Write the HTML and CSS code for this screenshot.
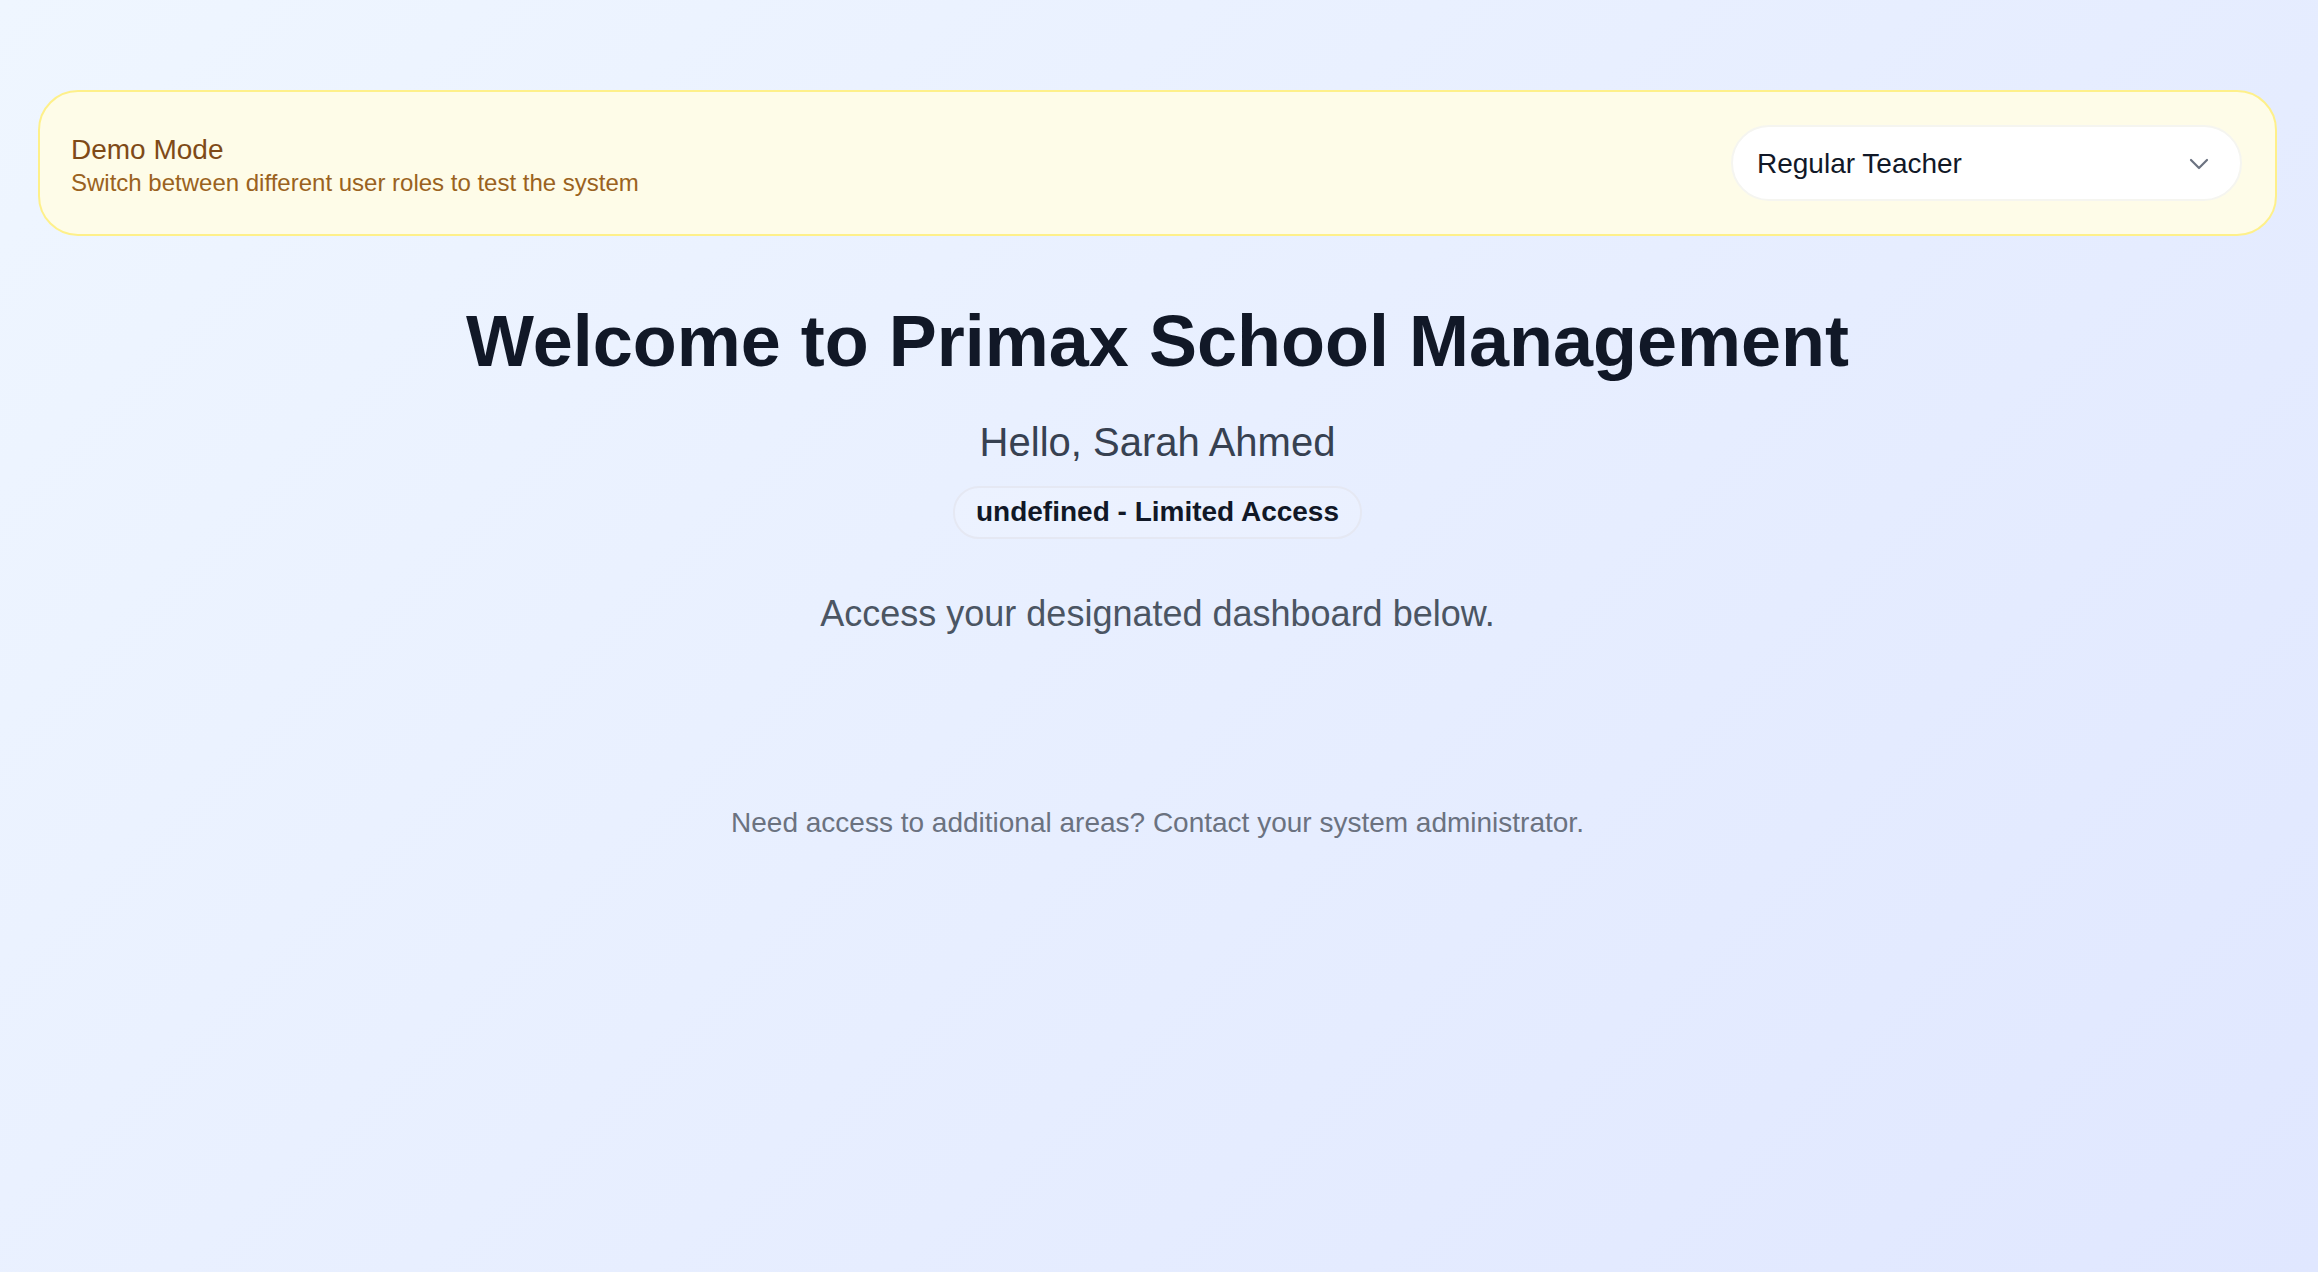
FILE: index.html
```html
<!DOCTYPE html>
<html lang="en">
<head>
<meta charset="utf-8">
<title>Primax School Management</title>
<link rel="stylesheet" href="styles.css">
</head>
<body>
<div class="page">
  <div class="demo-banner">
    <div class="demo-text">
      <div class="demo-title">Demo Mode</div>
      <div class="demo-sub">Switch between different user roles to test the system</div>
    </div>
    <div class="role-select">
      <span class="role-label">Regular Teacher</span>
      <svg class="chevron" width="20" height="12" viewBox="0 0 20 12" fill="none"><polyline points="2,2 10,10 18,2" stroke="#6b7280" stroke-width="2.2" stroke-linecap="round" stroke-linejoin="round"/></svg>
    </div>
  </div>
  <main class="welcome">
    <h1 class="title">Welcome to Primax School Management</h1>
    <p class="hello">Hello, Sarah Ahmed</p>
    <span class="badge">undefined - Limited Access</span>
    <p class="access">Access your designated dashboard below.</p>
    <p class="footer-note">Need access to additional areas? Contact your system administrator.</p>
  </main>
</div>
</body>
</html>
```
FILE: styles.css
```css
* { box-sizing: border-box; }
html, body { margin: 0; padding: 0; }
body {
  min-height: 100vh;
  font-family: "Liberation Sans", Arial, Helvetica, sans-serif;
  background: linear-gradient(135deg, #eff6ff 0%, #e0e7ff 100%);
  color: #111827;
}
.page {
  padding: 90px 41px 0 38px;
  min-height: 100vh;
}
.demo-banner {
  display: flex;
  align-items: center;
  justify-content: space-between;
  height: 146px;
  padding: 0 33px 0 31px;
  background: #fefce8;
  border: 2px solid #fef08a;
  border-radius: 40px;
}
.demo-text {
  display: flex;
  flex-direction: column;
  gap: 2px;
  padding-top: 6px;
}
.demo-title {
  font-size: 28px;
  line-height: 32px;
  color: #7f4a17;
}
.demo-sub {
  font-size: 24px;
  line-height: 30px;
  color: #9a6220;
}
.role-select {
  width: 511px;
  height: 76px;
  background: #ffffff;
  border: 2px solid #f5f5f0;
  border-radius: 38px;
  display: flex;
  align-items: center;
  justify-content: space-between;
  padding: 2px 31px 0 24px;
}
.role-label {
  font-size: 28px;
  color: #111827;
}
.chevron { display: block; }
.welcome {
  display: flex;
  flex-direction: column;
  align-items: center;
  text-align: center;
}
.title {
  margin: 69px 0 0;
  font-size: 72px;
  line-height: 72px;
  font-weight: 700;
  color: #111827;
}
.hello {
  margin: 41px 0 0;
  font-size: 40px;
  line-height: 48px;
  color: #374151;
}
.badge {
  margin-top: 20px;
  display: inline-block;
  font-size: 28px;
  line-height: 36px;
  font-weight: 700;
  color: #111827;
  padding: 6px 21px 7px;
  border: 2px solid #e5e8f3;
  border-radius: 26px;
  background: rgba(255, 255, 255, 0.15);
}
.access {
  margin: 51px 0 0;
  font-size: 36px;
  line-height: 48px;
  color: #4b5563;
}
.footer-note {
  margin: 167px 0 0;
  font-size: 28px;
  line-height: 36px;
  color: #6b7280;
}
```
